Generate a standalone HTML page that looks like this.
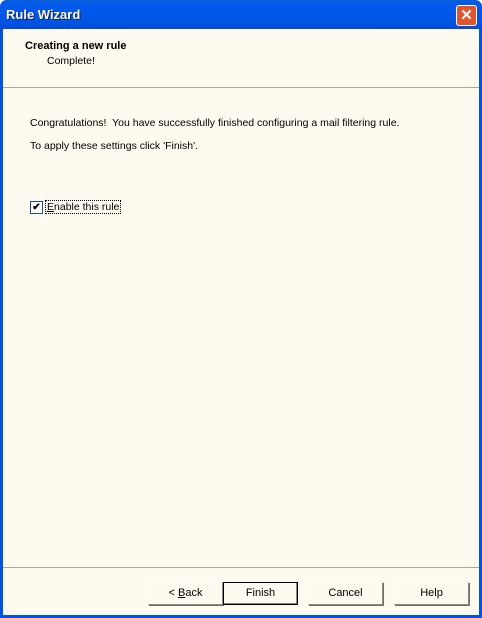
<!DOCTYPE html>
<html><head><style>
body{margin:0;width:482px;height:618px;overflow:hidden;font-family:"Liberation Sans",sans-serif;font-size:10.5px;}
.win{position:absolute;left:0;top:0;width:482px;height:618px;background:#0054e3;border-radius:7px 7px 0 0;}
.title{position:absolute;left:0;top:0;width:482px;height:30px;background:linear-gradient(#0a5fd8,#0058ee 20%,#0054e3 80%,#0846c8);border-radius:7px 7px 0 0;}
.title span{position:absolute;left:6px;top:7px;color:#fff;font-weight:bold;font-size:13px;text-shadow:1px 1px #0a1e6e;}
.close{position:absolute;left:456px;top:5px;width:19px;height:19px;background:#e2552c;border:1px solid #fff;border-radius:3px;color:#fff;font-size:15px;line-height:19px;text-align:center;font-weight:bold;}
.client{position:absolute;left:3px;top:29px;width:476px;height:586px;background:#fffaf0;}
.sep{position:absolute;left:0;width:476px;height:1px;background:#aca899;}
.btn{position:absolute;top:553px;width:73px;height:21px;border:1px solid #fff;border-right-color:#8c8a80;border-bottom-color:#8c8a80;box-shadow:1px 1px 0 #716f64;background:#fffaf0;text-align:center;line-height:21px;font-size:11px;}
</style></head><body>
<div class="win">
<div class="title"><span>Rule Wizard</span><div class="close">✕</div></div>
<div class="client">
<div style="position:absolute;left:22px;top:11px;font-weight:bold;font-size:11px">Creating a new rule</div>
<div style="position:absolute;left:44px;top:26px">Complete!</div>
<div class="sep" style="top:58px"></div>
<div style="position:absolute;left:27px;top:88px">Congratulations!&nbsp; You have successfully finished configuring a mail filtering rule.</div>
<div style="position:absolute;left:27px;top:111px">To apply these settings click 'Finish'.</div>
<div style="position:absolute;left:27px;top:172px;width:11px;height:11px;border:1px solid #1c5180;background:#fff;font-size:10px;line-height:11px;text-align:center;font-weight:bold">✔</div>
<div style="position:absolute;left:43px;top:172px;outline:1px dotted #000;padding:0 1px"><u>E</u>nable this rule</div>
<div class="sep" style="top:538px"></div>
<div class="btn" style="left:145px">&lt; <u>B</u>ack</div>
<div class="btn" style="left:220px;border:1px solid #000;box-shadow:inset -1px -1px 0 #8c8a80">Finish</div>
<div class="btn" style="left:305px">Cancel</div>
<div class="btn" style="left:391px">Help</div>
</div></div>
</body></html>
